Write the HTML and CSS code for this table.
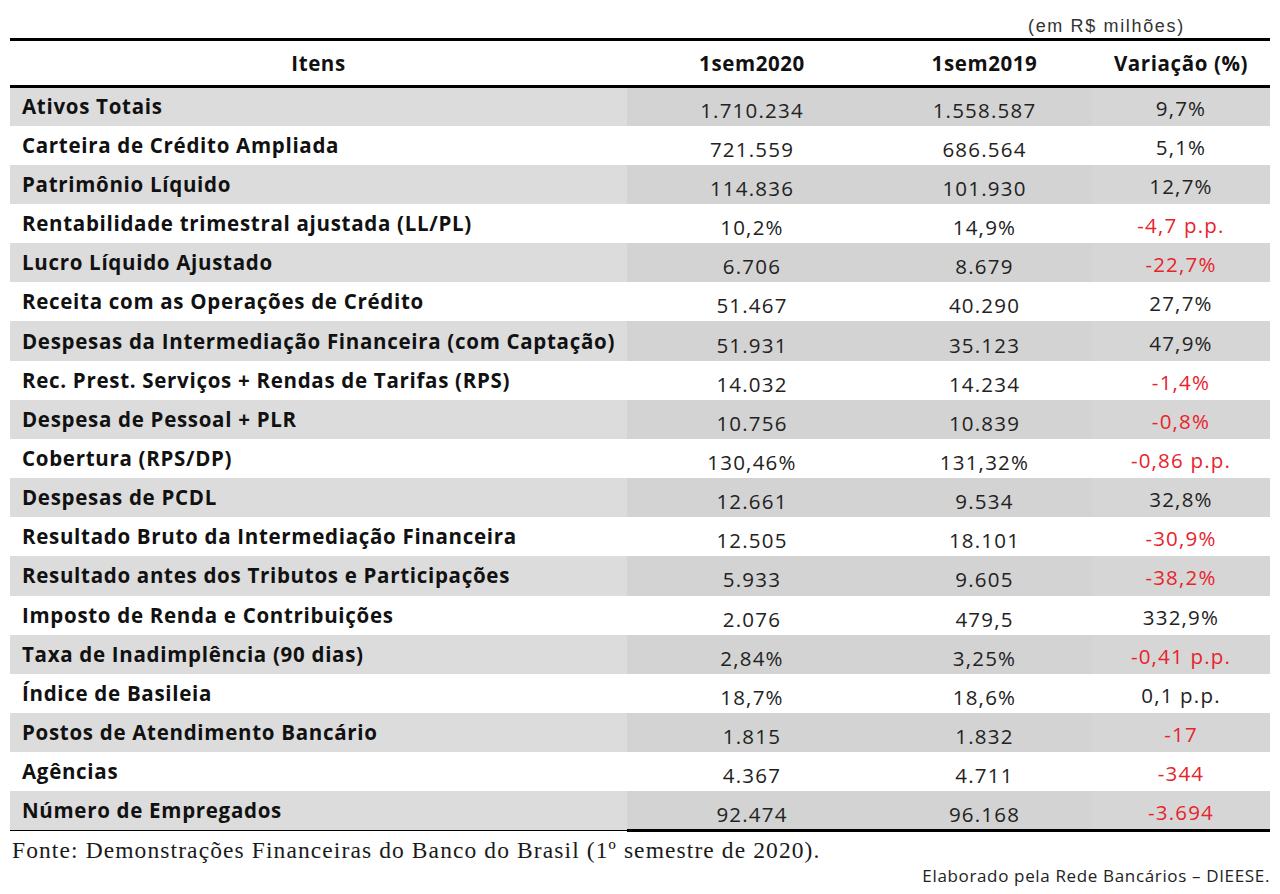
FILE: index.html
```html
<!DOCTYPE html>
<html lang="pt">
<head>
<meta charset="utf-8">
<link rel="stylesheet" href="styles.css">
</head>
<body>
<div class="page">
  <div class="unit">(em R$ milhões)</div>
  <table class="tbl">
    <thead>
      <tr><th class="lab">Itens</th><th class="c2">1sem2020</th><th class="c3">1sem2019</th><th class="c4">Variação (%)</th></tr>
    </thead>
    <tbody>
      <tr class="g"><td class="lab">Ativos Totais</td><td class="c2">1.710.234</td><td class="c3">1.558.587</td><td class="c4">9,7%</td></tr>
      <tr><td class="lab">Carteira de Crédito Ampliada</td><td class="c2">721.559</td><td class="c3">686.564</td><td class="c4">5,1%</td></tr>
      <tr class="g"><td class="lab">Patrimônio Líquido</td><td class="c2">114.836</td><td class="c3">101.930</td><td class="c4">12,7%</td></tr>
      <tr><td class="lab">Rentabilidade trimestral ajustada (LL/PL)</td><td class="c2">10,2%</td><td class="c3">14,9%</td><td class="c4 neg">-4,7 p.p.</td></tr>
      <tr class="g"><td class="lab">Lucro Líquido Ajustado</td><td class="c2">6.706</td><td class="c3">8.679</td><td class="c4 neg">-22,7%</td></tr>
      <tr><td class="lab">Receita com as Operações de Crédito</td><td class="c2">51.467</td><td class="c3">40.290</td><td class="c4">27,7%</td></tr>
      <tr class="g"><td class="lab">Despesas da Intermediação Financeira (com Captação)</td><td class="c2">51.931</td><td class="c3">35.123</td><td class="c4">47,9%</td></tr>
      <tr><td class="lab">Rec. Prest. Serviços + Rendas de Tarifas (RPS)</td><td class="c2">14.032</td><td class="c3">14.234</td><td class="c4 neg">-1,4%</td></tr>
      <tr class="g"><td class="lab">Despesa de Pessoal + PLR</td><td class="c2">10.756</td><td class="c3">10.839</td><td class="c4 neg">-0,8%</td></tr>
      <tr><td class="lab">Cobertura (RPS/DP)</td><td class="c2">130,46%</td><td class="c3">131,32%</td><td class="c4 neg">-0,86 p.p.</td></tr>
      <tr class="g"><td class="lab">Despesas de PCDL</td><td class="c2">12.661</td><td class="c3">9.534</td><td class="c4">32,8%</td></tr>
      <tr><td class="lab">Resultado Bruto da Intermediação Financeira</td><td class="c2">12.505</td><td class="c3">18.101</td><td class="c4 neg">-30,9%</td></tr>
      <tr class="g"><td class="lab">Resultado antes dos Tributos e Participações</td><td class="c2">5.933</td><td class="c3">9.605</td><td class="c4 neg">-38,2%</td></tr>
      <tr><td class="lab">Imposto de Renda e Contribuições</td><td class="c2">2.076</td><td class="c3">479,5</td><td class="c4">332,9%</td></tr>
      <tr class="g"><td class="lab">Taxa de Inadimplência (90 dias)</td><td class="c2">2,84%</td><td class="c3">3,25%</td><td class="c4 neg">-0,41 p.p.</td></tr>
      <tr><td class="lab">Índice de Basileia</td><td class="c2">18,7%</td><td class="c3">18,6%</td><td class="c4">0,1 p.p.</td></tr>
      <tr class="g"><td class="lab">Postos de Atendimento Bancário</td><td class="c2">1.815</td><td class="c3">1.832</td><td class="c4 neg">-17</td></tr>
      <tr><td class="lab">Agências</td><td class="c2">4.367</td><td class="c3">4.711</td><td class="c4 neg">-344</td></tr>
      <tr class="g last"><td class="lab">Número de Empregados</td><td class="c2">92.474</td><td class="c3">96.168</td><td class="c4 neg">-3.694</td></tr>
    </tbody>
  </table>
  <div class="source">Fonte: Demonstrações Financeiras do Banco do Brasil (1º semestre de 2020).</div>
  <div class="credit">Elaborado pela Rede Bancários – DIEESE.</div>
</div>
</body>
</html>
```
FILE: styles.css
```css
html, body {
  margin: 0;
  padding: 0;
  background: #ffffff;
}
.page {
  width: 1280px;
  height: 894px;
  box-sizing: border-box;
  padding: 0 10px 0 10px;
  color: #141414;
  font-family: "Open Sans", Lato, sans-serif;
}
.unit {
  height: 38px;
  box-sizing: border-box;
  padding: 15px 0 0 1018px;
  font-family: "Liberation Sans", Arial, sans-serif;
  font-size: 18px;
  letter-spacing: 1.65px;
  color: #333333;
  line-height: 22px;
}
.tbl {
  width: 1260px;
  border-collapse: collapse;
  table-layout: fixed;
}
.tbl th, .tbl td {
  padding: 0;
  font-size: 20.5px;
}
.tbl thead th {
  height: 47px;
  border-top: 3px solid #000;
  border-bottom: 3px solid #000;
  font-weight: 700;
  text-align: center;
  box-sizing: border-box;
  padding-top: 0;
  letter-spacing: 0.6px;
  color: #111111;
}
.lab { width: 617px; }
.c2 { width: 250px; }
.c3 { width: 215px; }
.c4 { width: 178px; }
.tbl tbody td {
  height: 39.16px;
  box-sizing: border-box;
  line-height: 26px;
}
.tbl tbody td.lab {
  font-weight: 700;
  padding-left: 12px;
  padding-bottom: 1px;
  white-space: nowrap;
  letter-spacing: 0.7px;
  color: #111111;
}
.tbl tbody td.c2, .tbl tbody td.c3, .tbl tbody td.c4 {
  text-align: center;
  padding-top: 7px;
  color: #222222;
  letter-spacing: 1.2px;
}
.tbl tbody td.c4 { padding-top: 3px; }
.tbl tbody tr.g td.lab { background: #dcdcdc; }
.tbl tbody tr.g td.c2, .tbl tbody tr.g td.c3 { background: #d3d3d3; }
.tbl tbody tr.g td.c4 { background: #d6d6d6; }
.tbl tbody td.neg { color: #e8232b; }
.tbl tbody tr.last td.lab { border-bottom: 1px solid #000; }
.tbl tbody tr.last td.c2, .tbl tbody tr.last td.c3, .tbl tbody tr.last td.c4 { border-bottom: 3px solid #000; }
.source {
  font-family: "Liberation Serif", "Times New Roman", serif;
  font-size: 23.5px;
  letter-spacing: 1.1px;
  line-height: 26px;
  padding: 5px 0 0 2px;
  color: #1a1a1a;
}
.credit {
  text-align: right;
  font-size: 17px;
  letter-spacing: 0.65px;
  line-height: 20px;
  padding-top: 3px;
  color: #222222;
}
```
